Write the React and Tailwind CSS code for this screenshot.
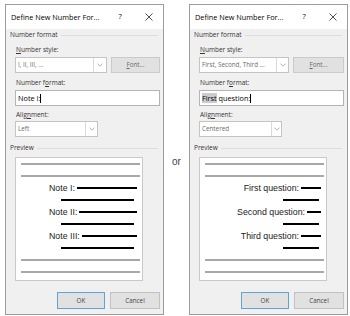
const ui = "font-['Open_Sans',sans-serif]";

const Chevron = () => (
  <svg width="6" height="4" viewBox="0 0 6 4">
    <path d="M0.5 0.6 L3 3.2 L5.5 0.6" fill="none" stroke="#9a9a9a" strokeWidth="0.8" />
  </svg>
);

const Select = ({ value, width, chev }) => (
  <div className={`flex h-[16px] border border-[#c4c4c4] bg-white ${width}`}>
    <div className="flex-1 flex items-center pl-[2px] text-[6.3px] text-[#6b6b6b] whitespace-nowrap overflow-hidden">
      {value}
    </div>
    <div className={`flex items-center justify-center border-l border-[#dadada] ${chev}`}>
      <Chevron />
    </div>
  </div>
);

const Label = ({ children }) => (
  <div className="h-[12px] flex items-center pl-[10px] text-[6.5px] text-[#333]">{children}</div>
);

const Group = ({ children }) => (
  <div className="h-[12px] flex items-center pl-[4px] pr-[5px]">
    <span className="text-[6.5px] text-[#333]">{children}</span>
    <div className="flex-1 h-px bg-[#dcdcdc] ml-[3px]" />
  </div>
);

const Gray = () => (
  <div className="h-[12px] flex items-center pl-[5px] pr-[2px]">
    <div className="flex-1 h-[2px] bg-[#a8a8a8]" />
  </div>
);

const Dialog = ({ styleValue, selWidth, selChev, format, alignValue, alignChev, children }) => (
  <div className={`w-[159px] h-[311px] border border-[#9c9c9c] bg-[#f0f0f0] flex flex-col ${ui}`}>
    <div className="h-[24px] bg-white flex items-center pl-[5px] text-[7.3px] text-black">
      <span className="whitespace-nowrap">Define New Number For...</span>
      <span className="ml-auto w-[8px] text-center text-[7.5px]">?</span>
      <span className="ml-[21px] w-[8px] mr-[10px] flex items-center justify-center">
        <svg width="8" height="8" viewBox="0 0 8 8">
          <path d="M0.5 0.5 L7.5 7.5 M7.5 0.5 L0.5 7.5" stroke="#222" strokeWidth="0.8" />
        </svg>
      </span>
    </div>
    <Group>Number format</Group>
    <div className="mt-[3px]">
      <Label><span className="underline">N</span>umber style:</Label>
    </div>
    <div className="mt-[1px] flex pl-[9px] pr-[3px] gap-[4px]">
      <Select value={styleValue} width={selWidth} chev={selChev} />
      <div className="flex-1 h-[16px] bg-[#e1e1e1] border border-[#cacaca] flex items-center justify-center text-[6.3px] text-[#6b6b6b]">
        <span><span className="underline">F</span>ont...</span>
      </div>
    </div>
    <div className="mt-[4px]">
      <Label>Number f<span className="underline">o</span>rmat:</Label>
    </div>
    <div className="mt-[1px] pl-[9px] pr-[3px]">
      <div className="h-[16px] bg-white border border-[#b4b4b4] flex items-center pl-[2px] text-[7.3px] text-black">
        {format}
        <div className="w-px h-[9px] bg-black" />
      </div>
    </div>
    <div className="mt-[3px]">
      <Label>Alig<span className="underline">n</span>ment:</Label>
    </div>
    <div className="pl-[9px]">
      <Select value={alignValue} width="w-[83px]" chev={alignChev} />
    </div>
    <div className="mt-[5px]">
      <Group>Preview</Group>
    </div>
    <div className="mt-[3px] pl-[9px]">
      <div className="w-[128px] h-[124px] bg-white border border-[#c9c9c9] flex flex-col font-['Liberation_Sans',Arial,sans-serif] text-[8.8px] text-[#222]">
        <Gray />
        <Gray />
        {children}
        <Gray />
        <Gray />
      </div>
    </div>
    <div className="mt-[11px] flex justify-end gap-[5px] pr-[3px]">
      <div className="w-[48px] h-[17px] bg-[#e1e1e1] border border-[#5da3e0] flex items-center justify-center text-[6.3px] text-[#444]">
        OK
      </div>
      <div className="w-[50px] h-[17px] bg-[#e1e1e1] border border-[#c2c2c2] flex items-center justify-center text-[6.3px] text-[#444]">
        Cancel
      </div>
    </div>
  </div>
);

const LeftRow = ({ text }) => (
  <>
    <div className="h-[12px] flex items-center pl-[33px] pr-[5px]">
      <span className="whitespace-nowrap leading-none">{text}</span>
      <div className="flex-1 h-[2px] bg-black ml-[2px]" />
    </div>
    <div className="h-[12px] flex items-center pl-[45px] pr-[8px]">
      <div className="flex-1 h-[2px] bg-black" />
    </div>
  </>
);

const RightRow = ({ text, line }) => (
  <>
    <div className="h-[12px] flex items-center justify-end pr-[5px]">
      <span className="whitespace-nowrap leading-none">{text}</span>
      <div className={`h-[2px] bg-black ml-[2px] ${line}`} />
    </div>
    <div className="h-[12px] flex items-center justify-end pr-[7px]">
      <div className="w-[36px] h-[2px] bg-black" />
    </div>
  </>
);

export default function App() {
  return (
    <div className="w-[350px] h-[316px] bg-white flex pt-[4px] pl-[5px]">
      <Dialog
        styleValue="I, II, III, ..."
        selWidth="w-[92px]"
        selChev="w-[13px]"
        format={<span>Note I:</span>}
        alignValue="Left"
        alignChev="w-[12px]"
      >
        <LeftRow text="Note I:" />
        <LeftRow text="Note II:" />
        <LeftRow text="Note III:" />
      </Dialog>
      <div className="w-[25px] flex items-center justify-center pt-[2px] font-['Liberation_Sans',Arial,sans-serif] text-[10px] text-[#444]">
        or
      </div>
      <Dialog
        styleValue="First, Second, Third ..."
        selWidth="w-[90px]"
        selChev="w-[12px]"
        format={<span><span className="bg-[#cccccc]">First</span> question:</span>}
        alignValue="Centered"
        alignChev="w-[10px]"
      >
        <RightRow text="First question:" line="w-[20px]" />
        <RightRow text="Second question:" line="w-[14px]" />
        <RightRow text="Third question:" line="w-[20px]" />
      </Dialog>
    </div>
  );
}
